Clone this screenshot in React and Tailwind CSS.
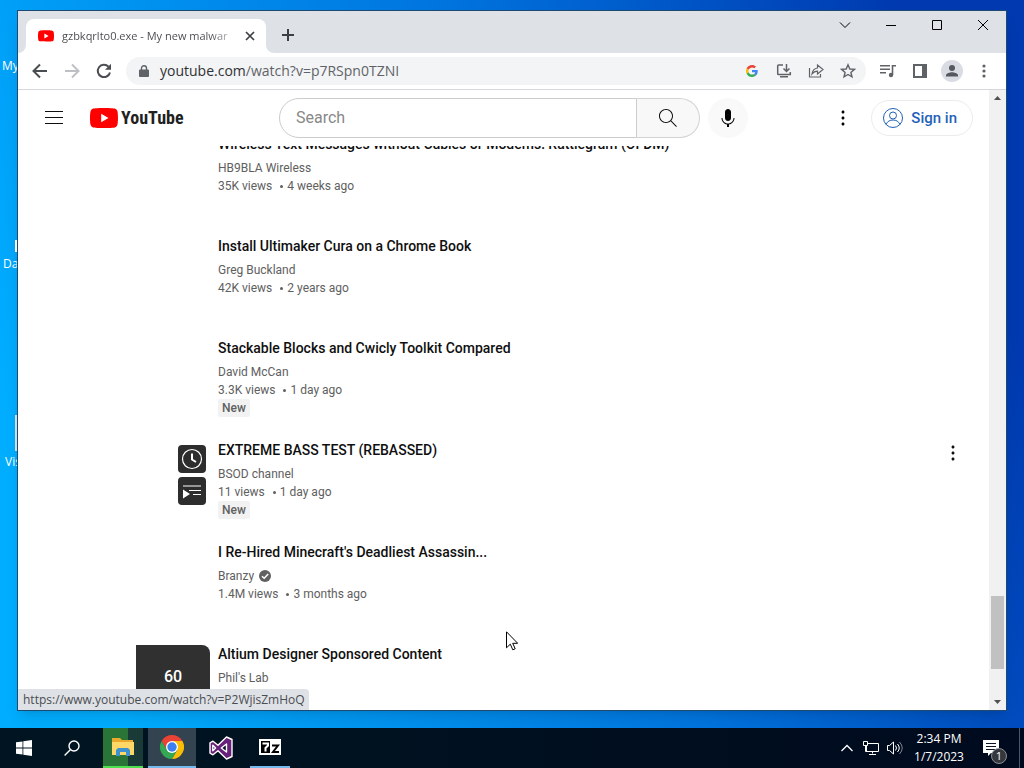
import React from "react";

const VIDEOS = [
  { title: "Wireless Text Messages without Cables or Modems: Rattlegram (OFDM)", channel: "HB9BLA Wireless", views: "35K views", age: "4 weeks ago" },
  { title: "Install Ultimaker Cura on a Chrome Book", channel: "Greg Buckland", views: "42K views", age: "2 years ago" },
  { title: "Stackable Blocks and Cwicly Toolkit Compared", channel: "David McCan", views: "3.3K views", age: "1 day ago", isNew: true },
  { title: "EXTREME BASS TEST (REBASSED)", channel: "BSOD channel", views: "11 views", age: "1 day ago", isNew: true, hovered: true },
  { title: "I Re-Hired Minecraft's Deadliest Assassin...", channel: "Branzy", views: "1.4M views", age: "3 months ago", verified: true },
  { title: "Altium Designer Sponsored Content", channel: "Phil's Lab", playlistCount: 60 },
];

function YouTubeMark({ className }) {
  return (
    <svg className={className} viewBox="0 0 28 20" aria-hidden="true">
      <path fill="#f00" d="M27.4 3.1A3.5 3.5 0 0 0 24.900.6C22.700 0 14 0 14 0S5.300 0 3.100.6A3.500 3.500 0 0 0 .6 3.100C0 5.300 0 10 0 10s0 4.700.6 6.900a3.500 3.500 0 0 0 2.500 2.500C5.300 20 14 20 14 20s8.700 0 10.900-.6a3.500 3.500 0 0 0 2.500-2.500C28 14.700 28 10 28 10s0-4.700-.6-6.900z" />
      <path fill="#fff" d="M11.200 14.300 18.500 10l-7.300-4.300z" />
    </svg>
  );
}

function Kebab({ className }) {
  return (
    <svg className={className} viewBox="0 0 24 24" fill="currentColor" aria-hidden="true">
      <path d="M12 16.500c.83 0 1.500.67 1.500 1.500s-.67 1.500-1.500 1.500-1.500-.67-1.500-1.500.67-1.500 1.500-1.500zM10.500 12c0 .83.67 1.500 1.500 1.500s1.500-.67 1.500-1.500-.67-1.500-1.500-1.500-1.500.67-1.500 1.500zm0-6c0 .83.67 1.500 1.500 1.500s1.500-.67 1.500-1.500-.67-1.500-1.500-1.500-1.500.67-1.500 1.500z" />
    </svg>
  );
}

function TabStrip() {
  return (
    <div className="flex h-[42px] items-end bg-[#dee1e6]">
      <div className="relative ml-2 flex h-[34px] w-60 items-center rounded-t-lg bg-white pr-2 pl-3">
        <svg className="absolute bottom-0 -left-2 size-2" viewBox="0 0 8 8" aria-hidden="true"><path fill="#fff" d="M8 0v8H0a8 8 0 0 0 8-8z" /></svg>
        <svg className="absolute -right-2 bottom-0 size-2" viewBox="0 0 8 8" aria-hidden="true"><path fill="#fff" d="M0 0v8h8a8 8 0 0 1-8-8z" /></svg>
        <YouTubeMark className="h-3 w-4 shrink-0" />
        <span className="ml-2 flex-1 bg-linear-to-r from-[#45484c] from-85% to-[#d5d7da] bg-clip-text text-[11px] whitespace-nowrap text-transparent">
          gzbkqrlto0.exe - My new malwar
        </span>
        <button aria-label="Close tab" className="ml-2 flex size-4 items-center justify-center text-[#3c4043]">
          <svg className="size-2.5" viewBox="0 0 10 10" stroke="currentColor" strokeWidth="1.700" aria-hidden="true"><path d="m1 1 8 8M9 1 1 9" /></svg>
        </button>
      </div>
      <button aria-label="New tab" className="mb-1 ml-2 flex size-7 items-center justify-center text-[#3c4043]">
        <svg className="size-3" viewBox="0 0 12 12" stroke="currentColor" strokeWidth="2" aria-hidden="true"><path d="M6 0v12M0 6h12" /></svg>
      </button>
      <div className="ml-auto flex self-start text-black">
        <button aria-label="Search tabs" className="flex h-7 w-[46px] items-center justify-center">
          <svg className="h-2 w-3" viewBox="0 0 12 8" fill="none" stroke="currentColor" aria-hidden="true"><path d="m1 1.500 5 5 5-5" /></svg>
        </button>
        <button aria-label="Minimize" className="flex h-7 w-[46px] items-center justify-center">
          <svg className="size-3" viewBox="0 0 12 12" stroke="currentColor" aria-hidden="true"><path d="M1 6.500h10" /></svg>
        </button>
        <button aria-label="Maximize" className="flex h-7 w-[46px] items-center justify-center">
          <svg className="size-3" viewBox="0 0 12 12" fill="none" stroke="currentColor" aria-hidden="true"><path d="M1.500 1.500h9v9h-9z" /></svg>
        </button>
        <button aria-label="Close" className="flex h-7 w-[46px] items-center justify-center">
          <svg className="size-3" viewBox="0 0 12 12" stroke="currentColor" aria-hidden="true"><path d="m1 1 10 10M11 1 1 11" /></svg>
        </button>
      </div>
    </div>
  );
}

function ToolButton({ label, disabled, children }) {
  return (
    <button aria-label={label} disabled={disabled} className="flex size-8 shrink-0 items-center justify-center text-[#5f6368] disabled:text-[#bdc1c6]">
      {children}
    </button>
  );
}

function Toolbar() {
  return (
    <div className="flex h-[37px] items-center border-b border-[#d5d7da] bg-white px-1.5">
      <ToolButton label="Back">
        <svg className="size-4" viewBox="0 0 16 16" fill="none" stroke="#4a4d51" strokeWidth="2" aria-hidden="true"><path d="M15 8H2M8 1.500 1.500 8 8 14.500" /></svg>
      </ToolButton>
      <ToolButton label="Forward" disabled>
        <svg className="size-4" viewBox="0 0 16 16" fill="none" stroke="currentColor" strokeWidth="2" aria-hidden="true"><path d="M1 8h13M8 1.500 14.500 8 8 14.500" /></svg>
      </ToolButton>
      <ToolButton label="Reload">
        <svg className="size-4" viewBox="0 0 16 16" aria-hidden="true"><path fill="none" stroke="#4a4d51" strokeWidth="2" d="M14 9.500A6.200 6.200 0 1 1 12.500 3.600" /><path fill="#4a4d51" d="M15 .8v6H9z" /></svg>
      </ToolButton>
      <div className="ml-1.5 flex h-7 flex-1 items-center rounded-full bg-[#f3f4f5] pr-0.5 pl-[13px]">
        <svg className="h-3 w-2.5" viewBox="0 0 10 12" aria-hidden="true"><path fill="#5f6368" d="M1 4.500h8a1 1 0 0 1 1 1V11a1 1 0 0 1-1 1H1a1 1 0 0 1-1-1V5.500a1 1 0 0 1 1-1z" /><path fill="none" stroke="#5f6368" strokeWidth="1.400" d="M2.500 5V3.200a2.500 2.500 0 0 1 5 0V5" /></svg>
        <button aria-label="Edit address" className="ml-[11px] flex-1 text-left text-sm whitespace-nowrap text-[#5f6368]">
          <span className="text-[#303134]">youtube.com</span>/watch?v=p7RSpn0TZNI
        </button>
        <ToolButton label="Search with Google">
          <svg className="size-3" viewBox="0 0 48 48" aria-hidden="true">
            <path fill="#ea4335" d="M24 9.500c3.540 0 6.710 1.220 9.210 3.600l6.850-6.850C35.900 2.380 30.470 0 24 0 14.620 0 6.510 5.380 2.560 13.220l7.980 6.190C12.430 13.720 17.740 9.500 24 9.500z" />
            <path fill="#4285f4" d="M46.980 24.550c0-1.570-.15-3.090-.38-4.550H24v9.020h12.940c-.58 2.960-2.260 5.480-4.780 7.180l7.730 6c4.510-4.180 7.090-10.360 7.090-17.650z" />
            <path fill="#fbbc05" d="M10.530 28.590a14.500 14.500 0 0 1 0-9.180l-7.980-6.190a24 24 0 0 0 0 21.560z" />
            <path fill="#34a853" d="M24 48c6.480 0 11.930-2.130 15.890-5.810l-7.730-6c-2.150 1.450-4.920 2.300-8.160 2.300-6.260 0-11.570-4.220-13.470-9.910l-7.980 6.190C6.510 42.620 14.620 48 24 48z" />
          </svg>
        </ToolButton>
        <ToolButton label="Install YouTube">
          <svg className="size-4" viewBox="0 0 16 16" fill="none" stroke="currentColor" strokeWidth="1.500" aria-hidden="true"><path d="M7 2H2.500a.8.8 0 0 0-.8.8v7.900a.8.8 0 0 0 .8.8h11.800V9M4 13.700h8M10.500 1v7.500M7.500 5.500l3 3 3-3" /></svg>
        </ToolButton>
        <ToolButton label="Share this page">
          <svg className="size-4" viewBox="0 0 16 16" fill="none" stroke="currentColor" strokeWidth="1.200" aria-hidden="true"><path d="M1.500 5v9h11v-3M9.500 5V2l5.500 4.500-5.500 4.500V8.200C7 8.200 5.500 9 4 11c.4-3 2-5.500 5.500-6z" /></svg>
        </ToolButton>
        <ToolButton label="Bookmark this tab">
          <svg className="size-4" viewBox="0 0 16 16" fill="none" stroke="currentColor" strokeWidth="1.400" aria-hidden="true"><path d="m8 1.800 1.800 4.200 4.600.4-3.500 3 1.100 4.500L8 11.500l-4 2.400 1.100-4.500-3.500-3 4.600-.4z" /></svg>
        </ToolButton>
      </div>
      <div className="ml-1.5 flex">
        <ToolButton label="Media controls">
          <svg className="size-4" viewBox="0 0 16 16" aria-hidden="true"><path fill="none" stroke="currentColor" strokeWidth="1.600" d="M0 2.800h10M0 6.300h10M0 9.800h6M12.500 12V2.800H16" /><circle cx="11" cy="12" r="2.200" fill="currentColor" /></svg>
        </ToolButton>
        <ToolButton label="Side panel">
          <svg className="size-3.5" viewBox="0 0 14 14" aria-hidden="true"><path fill="none" stroke="currentColor" strokeWidth="2" d="M1 1h12v12H1z" /><path fill="currentColor" d="M9 1h4v12H9z" /></svg>
        </ToolButton>
        <ToolButton label="Profile">
          <svg className="size-[22px]" viewBox="0 0 22 22" aria-hidden="true"><circle cx="11" cy="11" r="11" fill="#dadce4" /><circle cx="11" cy="8" r="3" fill="#55585d" /><path fill="#55585d" d="M5 16.500v-1.300c0-2 4-3 6-3s6 1 6 3v1.300z" /></svg>
        </ToolButton>
        <ToolButton label="Chrome menu">
          <svg className="size-4" viewBox="0 0 16 16" fill="currentColor" aria-hidden="true"><circle cx="8" cy="3" r="1.600" /><circle cx="8" cy="8" r="1.600" /><circle cx="8" cy="13" r="1.600" /></svg>
        </ToolButton>
      </div>
    </div>
  );
}

function Masthead() {
  return (
    <header className="relative z-10 flex h-14 shrink-0 items-center bg-white pr-4 pl-6">
      <button aria-label="Guide" className="flex size-6 items-center justify-center">
        <svg className="size-6" viewBox="0 0 24 24" fill="#0f0f0f" aria-hidden="true"><path d="M21 6H3V5h18v1zm0 5H3v1h18v-1zm0 6H3v1h18v-1z" /></svg>
      </button>
      <a href="#home" aria-label="YouTube Home" className="ml-6 flex items-center">
        <YouTubeMark className="h-5 w-7" />
        <span className="ml-[3px] font-['Liberation_Sans_Narrow','Roboto_Condensed',Roboto,sans-serif] text-lg font-bold text-[#212121]">YouTube</span>
      </a>
      <form role="search" className="absolute left-[261px] flex h-10 w-[421px]">
        <input aria-label="Search" placeholder="Search" className="min-w-0 flex-1 rounded-l-full border border-[#ccc] px-4 text-base text-[#111] outline-none placeholder:text-[#888]" />
        <button type="button" aria-label="Search" className="flex w-[63px] items-center justify-center rounded-r-full border border-l-0 border-[#d3d3d3] bg-[#f8f8f8]">
          <svg className="size-6" viewBox="0 0 24 24" fill="#0f0f0f" aria-hidden="true"><path d="m20.870 20.170-5.590-5.590C16.350 13.350 17 11.750 17 10c0-3.870-3.130-7-7-7s-7 3.130-7 7 3.130 7 7 7c1.750 0 3.350-.65 4.580-1.710l5.590 5.590.7-.71zM10 16c-3.310 0-6-2.690-6-6s2.690-6 6-6 6 2.690 6 6-2.690 6-6 6z" /></svg>
        </button>
      </form>
      <button aria-label="Search with your voice" className="absolute left-[690px] flex size-10 items-center justify-center rounded-full bg-[#f9f9f9]">
        <svg className="size-6" viewBox="0 0 24 24" fill="#030303" aria-hidden="true"><path d="M12 3c-1.660 0-3 1.370-3 3.070v5.860c0 1.700 1.340 3.070 3 3.070s3-1.370 3-3.070V6.070C15 4.370 13.660 3 12 3zM18.500 12h-1c0 3.030-2.470 5.500-5.500 5.500S6.500 15.030 6.500 12h-1c0 3.240 2.390 5.930 5.500 6.410V21h2v-2.590c3.110-.48 5.500-3.170 5.500-6.410z" /></svg>
      </button>
      <div className="ml-auto flex items-center gap-4">
        <button aria-label="Settings" className="text-[#030303]"><Kebab className="size-6" /></button>
        <a href="#signin" className="flex h-9 items-center gap-1.5 rounded-full border border-[#ececec] pr-[15px] pl-[9px] text-[15px] font-medium text-[#1f62b8]">
          <svg className="size-6" viewBox="0 0 24 24" fill="none" stroke="currentColor" aria-hidden="true"><circle cx="12" cy="12" r="9.500" /><circle cx="12" cy="9.500" r="3.500" /><path d="M5 18.500c1.500-3.300 4-4.500 7-4.500s5.500 1.200 7 4.500" /></svg>
          Sign in
        </a>
      </div>
    </header>
  );
}

function Thumbnail({ video }) {
  return (
    <div className="relative h-[94px] w-[168px] shrink-0 overflow-hidden rounded-lg">
      {video.hovered && (
        <div className="absolute top-1 right-1 flex flex-col gap-1">
          <button aria-label="Watch later" className="flex size-7 items-center justify-center rounded-sm bg-[#2d2d2d] text-white">
            <svg className="size-6" viewBox="0 0 24 24" fill="none" stroke="currentColor" aria-hidden="true"><circle cx="12" cy="12" r="9.500" strokeWidth="1.200" /><path strokeWidth="2" d="M12 6.500v6l4 2.500" /></svg>
          </button>
          <button aria-label="Add to queue" className="flex size-7 items-center justify-center rounded-sm bg-[#2d2d2d] text-white">
            <svg className="size-6" viewBox="0 0 24 24" fill="currentColor" aria-hidden="true"><path d="M21 7.500H3v-1h18v1zm0 3.500H9v1h12v-1zm0 4H13v1h8v-1zM3 10.500v9l7-4.500z" /></svg>
          </button>
        </div>
      )}
      {video.playlistCount && (
        <div className="absolute inset-y-0 right-0 flex w-[74px] flex-col items-center bg-[#303030] pt-5 text-white">
          <span className="text-base font-medium">{video.playlistCount}</span>
          <svg className="size-6" viewBox="0 0 24 24" fill="currentColor" aria-hidden="true"><path d="M22 7H2v1h20V7zm-9 5H2v-1h11v1zm0 4H2v-1h11v1zm2 3v-8l7 4-7 4z" /></svg>
        </div>
      )}
    </div>
  );
}

function VideoRow({ video }) {
  return (
    <li className="mb-2 flex h-[94px] shrink-0">
      <Thumbnail video={video} />
      <div className="ml-2 min-w-0 flex-1 text-xs leading-[18px] text-[#606060]">
        <h3 className="mb-1.5 text-sm leading-[18px] font-medium whitespace-nowrap text-[#0f0f0f]">
          <a href="#watch">{video.title}</a>
        </h3>
        <div className="flex items-center gap-1">
          <a href="#channel">{video.channel}</a>
          {video.verified && (
            <svg role="img" aria-label="Verified" className="size-3.5" viewBox="0 0 14 14"><circle cx="7" cy="7" r="6" fill="#606060" /><path fill="none" stroke="#fff" strokeWidth="1.500" d="m4 7.200 2.200 2.100L10.200 5" /></svg>
          )}
        </div>
        {video.views && (
          <div className="flex items-center">
            <span>{video.views}</span>
            <span aria-hidden="true" className="mr-1 ml-2 size-[3px] rounded-full bg-[#606060]" />
            <span>{video.age}</span>
          </div>
        )}
        {video.isNew && <span className="block w-fit rounded-xs bg-[#f2f2f2] px-1 font-medium">New</span>}
      </div>
      {video.hovered && (
        <button aria-label="Action menu" className="self-start text-[#0f0f0f]"><Kebab className="size-6" /></button>
      )}
    </li>
  );
}

function ScrollBar() {
  return (
    <div className="flex w-[17px] flex-col items-center bg-[#f1f1f1]" aria-hidden="true">
      <svg className="mt-1.5 h-1 w-[7px]" viewBox="0 0 7 4"><path fill="#505050" d="M0 4h7L3.500 0z" /></svg>
      <div className="flex-[495]" />
      <div className="w-[13px] flex-[73] bg-[#c1c1c1]" />
      <div className="flex-[31]" />
      <svg className="mb-1.5 h-1 w-[7px]" viewBox="0 0 7 4"><path fill="#505050" d="M0 0h7L3.500 4z" /></svg>
    </div>
  );
}

function BrowserWindow() {
  return (
    <section aria-label="Chrome" className="absolute top-2.5 right-[17px] bottom-[17px] left-[17px] flex flex-col border border-[#1d4a70] bg-white shadow-lg">
      <TabStrip />
      <Toolbar />
      <div className="relative flex min-h-0 flex-1">
        <main className="flex min-w-0 flex-1 flex-col overflow-hidden font-[Roboto,sans-serif]">
          <Masthead />
          <div className="min-h-0 flex-1 overflow-hidden px-6">
            <ul className="-mt-[11px] flex flex-col">
              {VIDEOS.map((v) => <VideoRow key={v.title} video={v} />)}
            </ul>
          </div>
        </main>
        <ScrollBar />
        <div className="absolute bottom-0 left-0 flex h-[21px] items-center rounded-tr-sm bg-[#dee1e6] pr-1 pl-[5px] text-xs text-[#4a4d51]">
          https://www.youtube.com/watch?v=P2WjisZmHoQ
        </div>
      </div>
    </section>
  );
}

function TaskButton({ label, className = "", children }) {
  return (
    <button aria-label={label} className={"flex h-full w-12 items-center justify-center " + className}>
      {children}
    </button>
  );
}

function Taskbar() {
  return (
    <footer className="flex h-10 shrink-0 items-center bg-linear-to-r from-[#001521] to-[#000a1e] text-white">
      <TaskButton label="Start">
        <svg className="size-4" viewBox="0 0 16 16" fill="#fff" aria-hidden="true"><path d="M0 2.300 6.500 1.400v6.200H0zM7.300 1.300 16 0v7.600H7.300zM0 8.400h6.500v6.200L0 13.700zM7.300 8.400H16V16l-8.700-1.300z" /></svg>
      </TaskButton>
      <TaskButton label="Search">
        <svg className="size-4" viewBox="0 0 16 16" fill="none" stroke="#fff" strokeWidth="1.400" aria-hidden="true"><circle cx="10" cy="6" r="5" /><path d="M6.300 9.700.6 15.400" /></svg>
      </TaskButton>
      <button aria-label="File Explorer" className="ml-[7px] flex h-full w-10 items-center justify-center border-b-2 border-[#4fe04f] bg-linear-to-r from-[#2b7437] from-62% to-[#1a3a38] to-62%">
        <svg className="h-5 w-[22px]" viewBox="0 0 22 20" aria-hidden="true"><path fill="#e9a92c" d="M0 1h8l2 2h11v6H0z" /><path fill="#ffd766" d="M0 5h22v13H0z" /><path fill="#3f91cf" d="M4 19v-6l2-2h10l2 2v6h-4v-4H8v4z" /></svg>
      </button>
      <TaskButton label="Google Chrome" className="ml-[5px] border-b-2 border-[#76b9ed] bg-[#33434f]">
        <svg className="size-6" viewBox="0 0 24 24" aria-hidden="true"><path fill="#ea4335" d="M1.600 6A12 12 0 0 1 22.400 6H12l-5.200 9z" /><path fill="#fbbc05" d="M22.400 6A12 12 0 0 1 12 24l5.200-9L12 6z" /><path fill="#34a853" d="M1.600 6A12 12 0 0 0 12 24l5.200-9H6.800z" /><circle cx="12" cy="12" r="6" fill="#fff" /><circle cx="12" cy="12" r="4.700" fill="#3c80f0" /></svg>
      </TaskButton>
      <TaskButton label="Visual Studio" className="ml-px">
        <svg className="size-6" viewBox="0 0 24 24" aria-hidden="true"><path fill="#68217a" stroke="#fff" strokeWidth="1.400" strokeLinejoin="round" fillRule="evenodd" d="M17.500 1 23 3.500v17L17.500 23 9 14.800l-5 4L1 17.200V6.800l3-1.600 5 4zM17.500 8 12.300 12l5.200 4zM3.800 9.300v5.400L6.600 12z" /></svg>
      </TaskButton>
      <TaskButton label="7-Zip" className="ml-px">
        <span className="flex h-full w-10 items-center justify-center border-b-2 border-[#76b9ed]">
          <svg className="h-4 w-[22px]" viewBox="0 0 22 16" aria-hidden="true"><path fill="#fff" d="M0 0h22v16H0z" /><path fill="#000" d="M2 2h9v12H2z" /><path fill="none" stroke="#fff" strokeWidth="2" d="M3.500 4.500h5.500v2L6.500 9v3.500" /><path fill="none" stroke="#000" strokeWidth="2" d="M13 6.500h6l-5 6.500h6" /></svg>
        </span>
      </TaskButton>
      <div className="ml-auto flex h-full items-center">
        <button aria-label="Show hidden icons" className="flex w-6 justify-center">
          <svg className="h-2 w-3" viewBox="0 0 12 8" fill="none" stroke="#fff" strokeWidth="1.300" aria-hidden="true"><path d="m.5 7 5.500-5.500L11.500 7" /></svg>
        </button>
        <button aria-label="Network" className="flex w-6 justify-center">
          <svg className="size-4" viewBox="0 0 16 16" fill="none" stroke="#fff" aria-hidden="true"><path d="M4.500 3.500h11v8h-12V6M9.500 11.500v2M6 14.500h7M.5 1.500h4v4h-4zM2.500 5.500v6h2" /></svg>
        </button>
        <button aria-label="Volume" className="flex w-6 justify-center">
          <svg className="size-4" viewBox="0 0 16 16" fill="none" stroke="#fff" aria-hidden="true"><path d="M.5 5.500h2L6.500 2v12l-4-3.500h-2zM8.500 5.500q2 2.500 0 5M10.500 4q3.500 4 0 8" /><path opacity=".5" d="M12.500 2q5.500 6 0 12" /></svg>
        </button>
        <div className="w-16 text-center text-xs leading-[18px]">
          <div>2:34 PM</div>
          <div>1/7/2023</div>
        </div>
        <button aria-label="1 new notification" className="relative flex h-full w-10 items-center justify-center">
          <svg className="size-4" viewBox="0 0 16 16" aria-hidden="true"><path fill="#fff" d="M0 0h16v13H8l-3 3v-3H0z" /><path stroke="#0b1422" d="M3 3.500h10M3 6.500h10M3 9.500h10" /></svg>
          <span className="absolute right-1 bottom-1 flex size-4 items-center justify-center rounded-full border border-[#8b8f94] bg-[#34383e] text-[11px]">1</span>
        </button>
        <div className="ml-2 h-full w-[5px] border-l border-[#4d5663]" />
      </div>
    </footer>
  );
}

export default function App() {
  return (
    <div className="flex h-screen flex-col overflow-hidden font-['Open_Sans','Noto_Sans',sans-serif]">
      <div className="relative min-h-0 flex-1 overflow-hidden bg-linear-[70deg] from-[#00adff] from-10% via-[#0074de] via-55% to-[#0039b0] to-90%">
        <span className="absolute top-[58px] left-0.5 text-xs text-white">My</span>
        <span className="absolute top-60 left-[15px] h-3 w-1 bg-white" />
        <span className="absolute top-64 left-[3px] text-xs text-white">Da</span>
        <span className="absolute top-[415px] left-[15px] h-9 w-1 bg-[#d8e6ec]" />
        <span className="absolute top-[454px] left-[5px] text-xs text-white">Vis</span>
        <BrowserWindow />
        <svg className="absolute top-[631px] left-[506px] h-5 w-3" viewBox="0 0 12 20" aria-hidden="true"><path fill="#fff" stroke="#000" d="M.5.8v16l3.800-3.600 2.500 5.600 2.400-1-2.500-5.500h5z" /></svg>
      </div>
      <Taskbar />
    </div>
  );
}
